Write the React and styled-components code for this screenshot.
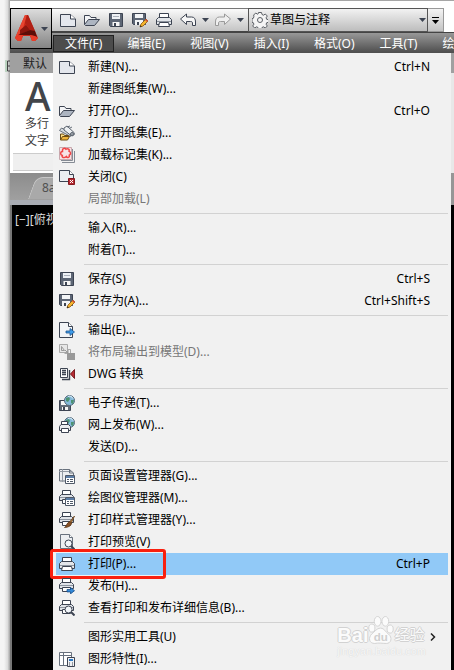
import React from "react";
import styled, { createGlobalStyle } from "styled-components";

const ink = "#3d4452";

const GlobalStyle = createGlobalStyle`
  body {
    margin: 0;
    background: #000;
    font-family: "Noto Sans", "Noto Sans CJK SC", sans-serif;
    font-size: 12px;
    color: #000;
  }
  button,
  select {
    font: inherit;
    color: inherit;
    border: none;
    background: none;
    padding: 0;
    margin: 0;
  }
`;

const Page = styled.div`
  position: relative;
  min-height: 100vh;
  display: flex;
  overflow: hidden;
`;

const Desktop = styled.div`
  width: 10px;
  flex: none;
  box-sizing: border-box;
  padding: 59px 0 0 5px;
  background: linear-gradient(90deg, #f4f4f4 40%, #dcdcdc 75%, #a2a2a2);
`;

const Window = styled.div`
  flex: 1;
  min-width: 0;
  display: flex;
  flex-direction: column;
  background: #fff;
  border-top: 1px solid #a6a6a6;
`;

const Header = styled.header`
  display: grid;
  grid-template-columns: 42px 1fr;
  margin-top: 7px;
  height: 45px;
  flex: none;
  background: linear-gradient(180deg, #9c9c9c 24px, #505050 44px);
`;

const AppButton = styled.button`
  height: 41px;
  display: flex;
  align-items: center;
  justify-content: center;
  gap: 3px;
  border: 1px solid #000;
  background: linear-gradient(180deg, #dcdcdc, #858585);
`;

const HeaderMain = styled.div`
  min-width: 0;
`;

const QuickAccess = styled.div`
  display: flex;
  align-items: stretch;
  height: 24px;
  background: #fff;
`;

const Tools = styled.div`
  width: 196px;
  height: 24px;
  box-sizing: border-box;
  flex: none;
  display: flex;
  align-items: center;
  gap: 8px;
  padding-left: 8px;
  border-top: 1px solid #777;
  border-bottom: 1px solid #444;
  background: linear-gradient(180deg, #fafafa, #c4c4c4);
`;

const ToolButton = styled.button`
  width: ${(p) => (p.$narrow ? "9px" : "16px")};
  margin: ${(p) => (p.$narrow ? "0 -3px" : "0")};
  height: 16px;
  flex: none;
  display: flex;
  align-items: center;
  justify-content: center;
`;

const Workspace = styled.label`
  flex: 1;
  min-width: 0;
  display: flex;
  align-items: center;
  gap: 2px;
  padding: 0 1px 0 3px;
  box-sizing: border-box;
  border: 1px solid #555;
  background: linear-gradient(180deg, #f2f2f2, #bdbdbd);
`;

const WorkspaceSelect = styled.select`
  appearance: none;
  flex: 1;
  min-width: 0;
  height: 20px;
  line-height: 20px;
  outline: none;
`;

const More = styled.button`
  width: 16px;
  margin-right: 10px;
  flex: none;
  border: 1px solid #999;
  border-left: none;
  background: linear-gradient(180deg, #f4f4f4, #c4c4c4);
  display: flex;
  align-items: center;
  justify-content: center;
`;

const MenuBar = styled.nav`
  display: flex;
  gap: 1px;
  height: 21px;
  box-sizing: border-box;
  padding: 2px 0 1px 1px;
  border-top: 1px solid #444;
  overflow: hidden;
  color: #fff;
`;

const MenuBarButton = styled.button`
  flex: none;
  padding: 0 12px;
  line-height: 16px;
  white-space: nowrap;
  ${(p) => p.$open && "background: #4c4c4c; box-shadow: inset 0 0 0 1px #222;"}
`;

const Body = styled.div`
  flex: 1;
  display: grid;
  grid-template-columns: 43px 1fr 3px;
`;

const Side = styled.div`
  min-width: 0;
  overflow: hidden;
  display: flex;
  flex-direction: column;
  white-space: nowrap;
  background: #8e8e8e;
`;

const RibbonTab = styled.div`
  line-height: 18px;
  padding: 2px 0 0 13px;
  background: #a0a0a0;
  color: #222;
`;

const Ribbon = styled.div`
  height: 100px;
  box-sizing: border-box;
  border: 1px solid #fff;
  border-right: none;
  background: #fff;
`;

const TextTool = styled.button`
  display: flex;
  flex-direction: column;
  align-items: flex-start;
  height: 79px;
  padding: 3px 0 0 14px;
  box-sizing: border-box;
  line-height: 17px;
  color: #3b3b3b;
`;

const BigLetter = styled.span`
  font-size: 39px;
  font-weight: 500;
  line-height: 38px;
  color: #42454a;
`;

const PanelTitle = styled.div`
  height: 18px;
  margin-left: 2px;
  border: 1px solid #ccc;
  border-width: 1px 0;
  background: #efefef;
  box-sizing: border-box;
`;

const FileTabs = styled.div`
  height: 27px;
  box-sizing: border-box;
  padding: 4px 0 0 18px;
  background: linear-gradient(180deg, #8c8c8c, #a0a0a0);
`;

const FileTab = styled.div`
  position: relative;
  z-index: 0;
  padding-left: 14px;
  line-height: 22px;
  color: #505050;

  &::before {
    content: "";
    position: absolute;
    z-index: -1;
    inset: 0 -20px 0 4px;
    border: 1px solid #c8c8c8;
    border-bottom: none;
    border-radius: 7px 0 0 0;
    background: #a9a9a9;
    transform: skewX(-20deg);
  }
`;

const Drawing = styled.div`
  flex: 1;
  margin-top: 5px;
  border-left: 2px solid #777;
  box-shadow: 0 -5px 0 #a9acb4;
  padding: 6px 0 0 3px;
  line-height: 17px;
  background: #000;
  color: #ddd;
`;

const Menu = styled.div`
  padding: 3px 3px 0;
  background: #f1f1f1;
  min-width: 0;
`;

const MenuItem = styled.button`
  position: relative;
  width: 100%;
  height: 22px;
  display: grid;
  grid-template-columns: 16px 1fr auto;
  column-gap: 13px;
  align-items: center;
  padding: 0 18px 0 3px;
  line-height: 22px;
  text-align: left;
  white-space: nowrap;
  color: ${(p) => (p.disabled ? "#777" : "#000")};
  background: ${(p) => (p.$active ? "#91c9f7" : "transparent")};
`;

const Chevron = styled.span`
  display: flex;
  margin-right: -12px;
`;

const Separator = styled.hr`
  height: 1px;
  margin: 3px 0 3px 28px;
  border: none;
  background: #d2d2d2;
`;

const Highlight = styled.span`
  position: absolute;
  left: -6px;
  top: -4px;
  width: 116px;
  height: 30px;
  box-sizing: border-box;
  border: 3px solid #f9200f;
  border-radius: 3px;
`;

const Edge = styled.div`
  background: linear-gradient(180deg, #a0a0a0 20px, #e8e8e8 20px 120px, #969696 120px 152px, #000 152px);
`;

const Watermark = styled.div`
  position: absolute;
  right: 28px;
  bottom: 12px;
  display: flex;
  flex-direction: column;
  pointer-events: none;
  color: #fbfbfb;
  text-shadow: 1px 0 #d2d2d2, -1px 0 #d2d2d2, 0 1px #d2d2d2, 0 -1px #d2d2d2;
`;

const WatermarkRow = styled.div`
  display: flex;
  align-items: flex-end;
  height: 30px;
  font: bold 20px/20px "Liberation Sans", "Noto Sans CJK SC", sans-serif;
`;

const WatermarkCn = styled.span`
  font-size: 15px;
  font-weight: 400;
`;

const WatermarkUrl = styled.div`
  font: 11px/13px "Liberation Sans", sans-serif;
  color: #f8f8f8;
  text-shadow: 0 0 1px #c8c8c8;
`;

const Svg = ({ children, w = 16, h = 16 }) => (
  <svg width={w} height={h} viewBox={`0 0 ${w} ${h}`} fill="none" stroke={ink} aria-hidden="true">
    {children}
  </svg>
);

const Caret = () => (
  <Svg w={7} h={4}>
    <path d="M0 0h7L3.500 4z" fill={ink} stroke="none" />
  </Svg>
);

/* shared drawing parts */
const Page16 = () => (
  <>
    <path d="M.5 2.500h10l5 4.500v7.500H.5z" fill="#e4e7ed" />
    <path d="M10.500 2.500v4.500h5" fill="#fff" />
  </>
);

const Floppy = () => (
  <>
    <path d="M1.500 1.500h13v13h-12l-1-1z" fill="#5d6675" />
    <path d="M4 2h8v5H4z" fill="#eef1f5" stroke="none" />
    <path d="M5 4.500h6" stroke="#aab0ba" />
    <path d="M4.500 10h7v4h-7z" fill="#f6f6f6" stroke="none" />
    <path d="M6 11h2v3H6z" fill={ink} stroke="none" />
  </>
);

const Printer = () => (
  <>
    <path d="M3.500 6.500v-5h9v5" fill="#fff" />
    <path d="M2.500 5.500h11l2 2v5h-15v-5z" fill="#e3e6ea" />
    <path d="M1 9.500h14" stroke="#8d949e" />
    <path d="M3.500 10.500h9l1 4h-11z" fill="#fff" />
  </>
);

const SmallPrinter = () => (
  <>
    <path d="M3.500 4.500v-4h8v4" fill="#fff" />
    <path d="M2.500 4.500h10l2 2v4h-14v-4z" fill="#e0e3e8" />
    <path d="M1 7.500h13" stroke="#8d949e" />
    <path d="M3.500 9.500h8v4h-8z" fill="#fff" />
  </>
);

const Pencil = () => (
  <>
    <path d="M8 15l1-3 5-5 2 2-5 5z" fill="#f5b52d" stroke="#8c5710" strokeWidth=".8" />
    <path d="M13 8l1-1 2 2-1 1z" fill="#d34a3c" stroke="none" />
    <path d="M8 15l.6-1.700 1.200 1.200z" fill="#222" stroke="none" />
  </>
);

const Panel = () => (
  <>
    <path d="M6.500 7.500h9v8h-9z" fill="#fff" stroke="#4f5968" />
    <path d="M7 9h8" stroke="#5d7ea6" strokeWidth="2" />
    <path d="M8 11.500h2m1 0h3M8 13.500h2m1 0h3" stroke="#4f5968" />
  </>
);

const Lens = () => (
  <>
    <circle cx="9.500" cy="9.500" r="3.500" fill="#f2f6fa" />
    <path d="M12 12l3.500 3.500" strokeWidth="2" />
  </>
);

const Globe = () => (
  <>
    <circle cx="10.500" cy="5.500" r="5" fill="#84b9da" stroke="#546879" />
    <path d="M7 3l3-1 1 2-2 3-2-1zM12 5l3 0-1 4-2-1z" fill="#4d9272" stroke="none" />
    <path d="M9 1.500c2-1 4 0 5 2" stroke="#e2f2fb" />
  </>
);

const icons = {
  page: <Page16 />,
  open: (
    <>
      <path d="M.5 12.500v-9h5l1.500 2h5v3" fill="#f4f5f7" />
      <path d="M.5 12.500l4-5h11l-5 6h-9z" fill="#adb5c1" />
    </>
  ),
  openSet: (
    <>
      <path d="M.5 5.500l2-2.500 9 4.500v4z" fill="#d5d9de" stroke="#68717c" />
      <path d="M5 3l3-2 7 6.500c1.500 2-1 4-3 3L5 5z" fill="#eceff2" stroke="#5a626d" />
      <path d="M8 2l3-1m-1 2.500l3-1.500" stroke="#68717c" />
      <circle cx="13" cy="9" r="1.500" fill="#aab0b8" stroke="#5a626d" />
      <path d="M1.500 15v-6h3l1 1.500h4v1.500" fill="#ffe08a" stroke="#6d4c13" />
      <path d="M1.500 15l2-3.500h7l-2 3.500z" fill="#f0b53a" stroke="#6d4c13" />
    </>
  ),
  markup: (
    <>
      <path d="M3 15.500h12.500V4M2 13.500h11.500V2" stroke="#858b94" />
      <path d="M.5.500h12v12H.5z" fill="#f6e2e5" stroke="#c9a8ae" />
      <path
        d="M3.500 3c0-2 2.500-2 3.500-.8 2-1.200 4 .3 3 2 2 1 2 3 .3 4 .7 2.300-2 3-3 1.300-2 2-5 1-4-1-2.500-1-2-4 .2-4z"
        stroke="#f04345"
        strokeWidth="1.500"
      />
    </>
  ),
  close: (
    <>
      <path d="M.5 1.500h10l4 4v7H.5z" fill="#eceef1" />
      <path d="M10.500 1.500v4h4" fill="#fff" />
      <path d="M9.500 9.500h6v6h-6z" fill="#b72b32" stroke="#851a20" />
      <path d="M11 11l3 3m0-3l-3 3" stroke="#fff" />
    </>
  ),
  save: <Floppy />,
  saveAs: (
    <>
      <path d="M.5 1.500h13v11h-12l-1-1z" fill="#5d6675" />
      <path d="M3 2h8v4H3zM3 8h8v5H3z" fill="#f2f4f6" stroke="none" />
      <path d="M5 10h2v3H5z" fill={ink} stroke="none" />
      <Pencil />
    </>
  ),
  exportFile: (
    <>
      <path d="M.5.500h9l4 4v11H.5z" fill="#f2f4f6" />
      <path d="M9.500.500v4h4" fill="#fff" />
      <path d="M7 9h4V6.500l4.500 3.500-4.500 3.500V11H7z" fill="#3e9be8" stroke="#1f568f" strokeWidth=".8" />
    </>
  ),
  layout: (
    <>
      <path d="M.5.500h8v8h-8z" fill="#e7e7e7" stroke="#aaa" />
      <path d="M2.500 2.500v4h3zM6 6l3 3m0-3v3H6" stroke="#999" />
      <path d="M8.500 5.500h3v4h-6" stroke="#aaa" />
      <path d="M8 9h8v7H8z" fill="#999" stroke="none" />
    </>
  ),
  dwg: (
    <>
      <path d="M1.500 2.500h7v9h-7z" fill="#fff" />
      <path d="M3 4.500h4M3 6.500h4M3 8.500h4M3 13.500h7.500V4" strokeWidth="1.400" />
      <path d="M15.500 3.500v9L11.500 8z" fill="#b72b32" stroke="#771a20" />
    </>
  ),
  transmit: (
    <>
      <path d="M.5 5.500h11v10h-11z" fill="#626c79" />
      <path d="M2 6h7v4H2zM3 12h6v3H3z" fill="#f4f5f6" stroke="none" />
      <path d="M4 12h2v3H4z" fill={ink} stroke="none" />
      <Globe />
    </>
  ),
  webPublish: (
    <>
      <Globe />
      <path d="M2.500 7.500v-3h6v3" fill="#fff" />
      <path d="M2 7.500h7.500l2 2v4H.5v-4z" fill="#eceef0" />
      <path d="M2.500 11.500h7v4h-7z" fill="#fff" />
    </>
  ),
  pageSetup: (
    <>
      <path d="M.5 1.500h10l4 3.500v8H.5z" fill="#eceef0" stroke="#68717d" />
      <path d="M3.500 1v13M0 3.500h12" stroke="#9299a2" />
      <path d="M10.500 1.500V5h4" stroke="#68717d" />
      <Panel />
    </>
  ),
  plotter: (
    <>
      <SmallPrinter />
      <Panel />
    </>
  ),
  plotStyle: (
    <>
      <SmallPrinter />
      <path d="M15.500 4l-5 6 1.500 1.500z" fill="#b48246" stroke="#6b431d" strokeWidth=".8" />
      <path d="M11 9.500l1.500 1.500c0 3-4 4.500-7 4.500 2-1 2-5 5.500-6z" fill="#895126" stroke="#5c3618" strokeWidth=".8" />
    </>
  ),
  preview: (
    <>
      <path d="M1.500.500h9l3 3v11h-12z" fill="#eceef1" stroke="#68717d" />
      <path d="M10.500.500v3h3" fill="#fff" stroke="#68717d" />
      <Lens />
    </>
  ),
  print: <Printer />,
  publish: (
    <>
      <SmallPrinter />
      <path d="M8 11.500h3.500v-2l4 3.200-4 3.200v-2H8z" fill="#3289d8" stroke="#174b86" strokeWidth=".8" />
    </>
  ),
  details: (
    <>
      <SmallPrinter />
      <Lens />
    </>
  ),
  properties: (
    <>
      <path d="M.5 1.500h12v13H.5z" fill="#fff" stroke="#68717d" />
      <path d="M0 4.500h13M4.500 1v14" stroke="#68717d" />
      <path d="M8.500 6.500h7v9h-7z" fill="#f0f1f3" />
      <path d="M10 8h4v2h-4z" fill="#2a79c3" stroke="none" />
      <path d="M10 12h1m2 0h1m-4 2h1m2 0h1" />
    </>
  ),
  undo: <path d="M.5 7l6-5v3h5c3 0 4 2 4 5v3.500h-3V11c0-1-.5-1.500-2-1.500h-4v3z" fill="#f7f7f7" />,
  redo: (
    <path d="M15.500 7l-6-5v3h-5c-3 0-4 2-4 5v3.500h3V11c0-1 .5-1.500 2-1.500h4v3z" fill="#efefef" stroke="#999" />
  ),
};

const tools = [
  ["page", "新建"],
  ["open", "打开"],
  ["save", "保存"],
  ["saveAs", "另存为"],
  ["print", "打印"],
  ["undo", "放弃"],
  [null, "放弃列表"],
  ["redo", "重做"],
  [null, "重做列表"],
];

const menuTitles = ["文件(F)", "编辑(E)", "视图(V)", "插入(I)", "格式(O)", "工具(T)", "绘"];

const groups = [
  [
    { icon: "page", label: "新建(N)...", keys: "Ctrl+N" },
    { label: "新建图纸集(W)..." },
    { icon: "open", label: "打开(O)...", keys: "Ctrl+O" },
    { icon: "openSet", label: "打开图纸集(E)..." },
    { icon: "markup", label: "加载标记集(K)..." },
    { icon: "close", label: "关闭(C)" },
    { label: "局部加载(L)", disabled: true },
  ],
  [{ label: "输入(R)..." }, { label: "附着(T)..." }],
  [
    { icon: "save", label: "保存(S)", keys: "Ctrl+S" },
    { icon: "saveAs", label: "另存为(A)...", keys: "Ctrl+Shift+S" },
  ],
  [
    { icon: "exportFile", label: "输出(E)..." },
    { icon: "layout", label: "将布局输出到模型(D)...", disabled: true },
    { icon: "dwg", label: "DWG 转换" },
  ],
  [
    { icon: "transmit", label: "电子传递(T)..." },
    { icon: "webPublish", label: "网上发布(W)..." },
    { label: "发送(D)..." },
  ],
  [
    { icon: "pageSetup", label: "页面设置管理器(G)..." },
    { icon: "plotter", label: "绘图仪管理器(M)..." },
    { icon: "plotStyle", label: "打印样式管理器(Y)..." },
    { icon: "preview", label: "打印预览(V)" },
    { icon: "print", label: "打印(P)...", keys: "Ctrl+P", active: true },
    { icon: "publish", label: "发布(H)..." },
    { icon: "details", label: "查看打印和发布详细信息(B)..." },
  ],
  [
    { label: "图形实用工具(U)", submenu: true },
    { icon: "properties", label: "图形特性(I)..." },
  ],
];

const Logo = () => (
  <svg width="23" height="27" viewBox="0 0 23 27" aria-hidden="true">
    <path d="M10 0h3l10 23-3 3h-3l-2-5H8l-2 5H3l-3-3z" fill="#c9281a" />
    <path d="M10 0h2L8 13 4 20l-4 3z" fill="#e8442f" />
    <path d="M12 0h1l7 16-5-1-5-7z" fill="#b01f14" />
    <path d="M5 15l6-5 4 5-10 5z" fill="#8c160e" />
    <path d="M3 20l12-5 5 1 2 6-6-2H9z" fill="#5d0d08" />
    <path d="M0 23l4-3h4l-2 6H3zM15 20l5 1 3 2-3 3h-3z" fill="#ea3c28" />
  </svg>
);

const Gear = () => (
  <svg width="16" height="16" viewBox="0 0 16 16" fill="#f4f4f4" stroke="#5c6066" aria-hidden="true">
    <path d="M6.500.500h3l.5 2 1.500.7 1.800-1.200 2 2-1.200 1.800.6 1.500 1.800.4v2.600l-1.800.4-.6 1.500 1.200 1.800-2 2-1.800-1.200-1.500.7-.5 1h-3l-.5-1-1.500-.7-1.800 1.200-2-2 1.200-1.800-.6-1.500-1.300-.4V6.700l1.300-.4.6-1.500L1.700 3l2-2 1.800 1.200.7-.4z" />
    <circle cx="8" cy="8" r="2.500" />
  </svg>
);

const Paw = () => (
  <svg width="26" height="30" viewBox="0 0 27 30" fill="#fbfbfb" stroke="#d2d2d2" aria-hidden="true">
    <ellipse cx="10" cy="6" rx="3.500" ry="5" />
    <ellipse cx="18" cy="6" rx="3.500" ry="5" />
    <ellipse cx="4" cy="13" rx="3.200" ry="4.200" />
    <ellipse cx="23" cy="14" rx="3.200" ry="4.200" />
    <path d="M13 13c4 0 5 4 8 6 5 4 3 10-2 10-3 0-8-1-12 0-6 0-7-6-3-10 3-2 5-6 9-6z" />
    <text
      x="6"
      y="26"
      fontSize="12"
      fontWeight="700"
      fill="#cfcfcf"
      stroke="none"
      fontFamily="Liberation Sans, sans-serif"
      style={{ textShadow: "none" }}
    >
      du
    </text>
  </svg>
);

function Item({ item }) {
  return (
    <MenuItem type="button" role="menuitem" disabled={item.disabled} $active={item.active}>
      {item.icon ? <Svg>{icons[item.icon]}</Svg> : <span />}
      <span>{item.label}</span>
      {item.keys && <span>{item.keys}</span>}
      {item.submenu && (
        <Chevron>
          <Svg w={6} h={8}>
            <path d="M1 .5L4.500 4 1 7.500" stroke="#222" strokeWidth="1.500" />
          </Svg>
        </Chevron>
      )}
      {item.active && <Highlight />}
    </MenuItem>
  );
}

export default function App() {
  return (
    <Page>
      <GlobalStyle />
      <Desktop>
        <Svg w={5} h={12}>
          <path d="M1 0v12" stroke="#8fc09a" />
          <path d="M5 1H2.500v10H5M3 6h2" stroke="#444" />
        </Svg>
      </Desktop>
      <Window>
        <Header>
          <AppButton type="button" aria-label="应用程序菜单">
            <Logo />
            <Caret />
          </AppButton>
          <HeaderMain>
            <QuickAccess>
              <Tools>
                {tools.map(([icon, name]) => (
                  <ToolButton type="button" key={name} aria-label={name} $narrow={!icon}>
                    {icon ? <Svg>{icons[icon]}</Svg> : <Caret />}
                  </ToolButton>
                ))}
              </Tools>
              <Workspace>
                <Gear />
                <WorkspaceSelect aria-label="工作空间">
                  <option>草图与注释</option>
                </WorkspaceSelect>
                <Caret />
              </Workspace>
              <More type="button" aria-label="自定义快速访问工具栏">
                <Svg w={7} h={7}>
                  <path d="M0 0h7v1H0zM0 3h7L3.500 7z" fill="#000" stroke="none" />
                </Svg>
              </More>
            </QuickAccess>
            <MenuBar>
              {menuTitles.map((title, i) => (
                <MenuBarButton type="button" key={title} $open={i === 0}>
                  {title}
                </MenuBarButton>
              ))}
            </MenuBar>
          </HeaderMain>
        </Header>
        <Body>
          <Side>
            <RibbonTab>默认</RibbonTab>
            <Ribbon>
              <TextTool type="button">
                <BigLetter>A</BigLetter>
                <span>多行</span>
                <span>文字</span>
              </TextTool>
              <PanelTitle />
            </Ribbon>
            <FileTabs>
              <FileTab>8a</FileTab>
            </FileTabs>
            <Drawing>[−][俯视]</Drawing>
          </Side>
          <Menu role="menu">
            {groups.map((group, i) => (
              <React.Fragment key={group[0].label}>
                {i > 0 && <Separator />}
                {group.map((item) => (
                  <Item key={item.label} item={item} />
                ))}
              </React.Fragment>
            ))}
          </Menu>
          <Edge />
        </Body>
      </Window>
      <Watermark>
        <WatermarkRow>
          <span>Bai</span>
          <Paw />
          <WatermarkCn>经验</WatermarkCn>
        </WatermarkRow>
        <WatermarkUrl>jingyan.baidu.com</WatermarkUrl>
      </Watermark>
    </Page>
  );
}
